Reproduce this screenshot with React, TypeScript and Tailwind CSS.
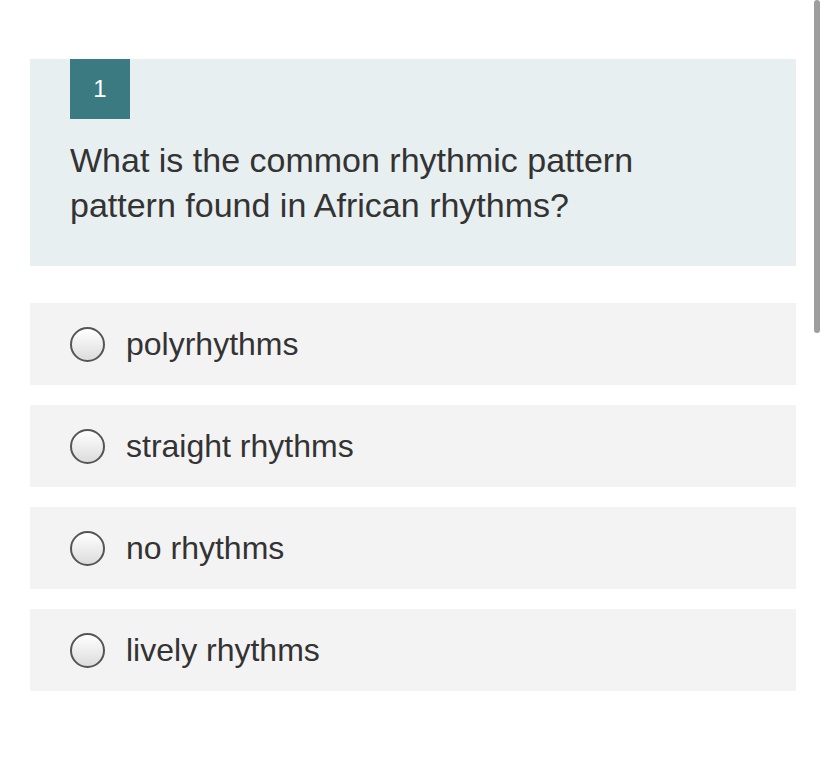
import React from 'react';

const options = ['polyrhythms', 'straight rhythms', 'no rhythms', 'lively rhythms'];

const App: React.FC = () => {
  return (
    <div
      className="relative w-[826px] h-[768px] bg-white overflow-hidden"
      style={{ fontFamily: '"Liberation Sans", Arial, sans-serif' }}
    >
      {/* fake scrollbar thumb */}
      <div className="absolute left-[814px] top-0 w-[6px] h-[333px] rounded-full bg-[#9e9e9e]" />

      <div className="pt-[59px] pl-[30px] w-[796px]">
        {/* Question */}
        <div className="bg-[#e8eff0] h-[207px] pl-[40px]">
          <div className="w-[60px] h-[60px] bg-[#3a7a80] text-white text-[24px] flex items-center justify-center">
            1
          </div>
          <p className="mt-[19px] text-[34px] leading-[45px] text-[#333333] w-[640px]">
            What is the common rhythmic pattern pattern found in African rhythms?
          </p>
        </div>

        {/* Options */}
        <div className="mt-[37px] flex flex-col gap-[20px]">
          {options.map((opt) => (
            <div key={opt} className="bg-[#f3f3f3] h-[82px] flex items-center pl-[40px]">
              <span className="w-[35px] h-[35px] rounded-full border-2 border-[#555555] bg-gradient-to-b from-white to-[#dcdcdc] shrink-0" />
              <span className="ml-[21px] text-[32px] text-[#333333]">{opt}</span>
            </div>
          ))}
        </div>
      </div>
    </div>
  );
};

export default App;
